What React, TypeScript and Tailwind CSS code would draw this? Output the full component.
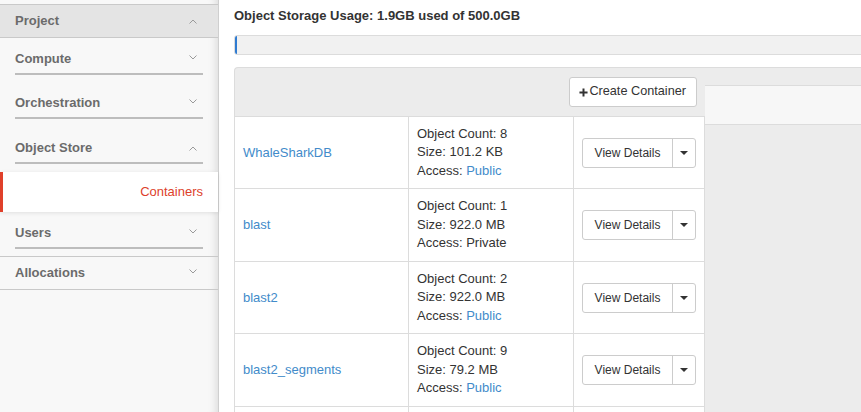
import React from 'react';

const containers = [
  { name: 'WhaleSharkDB', count: 8, size: '101.2 KB', access: 'Public' },
  { name: 'blast', count: 1, size: '922.0 MB', access: 'Private' },
  { name: 'blast2', count: 2, size: '922.0 MB', access: 'Public' },
  { name: 'blast2_segments', count: 9, size: '79.2 MB', access: 'Public' },
];

function Chevron({ up }: { up?: boolean }) {
  return (
    <svg width="8" height="5" viewBox="0 0 8 5" className={up ? 'text-[#9a9a9a]' : 'text-[#9a9a9a] -translate-y-[2px]'}>
      <path
        d={up ? 'M0.5 4.5 L4 1 L7.5 4.5' : 'M0.5 0.5 L4 4 L7.5 0.5'}
        fill="none"
        stroke="currentColor"
        strokeWidth="1"
      />
    </svg>
  );
}

function NavHeading({ label, up, pb, last }: { label: string; up?: boolean; pb: string; last?: boolean }) {
  return (
    <div className={`px-[15px] pt-[13px] ${pb} ${last ? 'border-b border-[#c9c9c9]' : ''}`}>
      <div className="flex items-center justify-between h-[16px]">
        <span className="text-[13px] font-bold leading-[16px] text-[#6b6b6b]">{label}</span>
        <span className="mr-[6px] flex">
          <Chevron up={up} />
        </span>
      </div>
      <div className="mt-[6px] h-[2px] bg-[#bdbdbd]" />
    </div>
  );
}

function Sidebar() {
  return (
    <div className="w-[219px] shrink-0 h-full bg-[#f8f8f8] border-r border-[#cfcfcf] shadow-[inset_-10px_0_8px_-8px_rgba(0,0,0,0.12)]">
      <div className="h-[5px] border-b border-[#c9c9c9]" />
      {/* Project */}
      <div className="h-[33px] bg-[#e4e4e4] border-b border-[#c9c9c9] px-[15px] flex items-center justify-between">
        <span className="text-[13px] font-bold text-[#6b6b6b]">Project</span>
        <span className="mr-[6px] flex">
          <Chevron up />
        </span>
      </div>
      <NavHeading label="Compute" pb="pb-[7px]" />
      <NavHeading label="Orchestration" pb="pb-[8px]" />
      <NavHeading label="Object Store" up pb="pb-[8px]" />
      {/* active item */}
      <div className="h-[40px] bg-white border-l-[3px] border-[#e0402a] flex items-center justify-end pr-[15px] shadow-[0_1px_4px_rgba(0,0,0,0.1)] relative">
        <span className="text-[13px] text-[#dd3f2b]">Containers</span>
      </div>
      <NavHeading label="Users" pb="pb-[7px]" last />
      <div className="h-[33px] border-b border-[#c9c9c9] px-[15px] flex items-center justify-between">
        <span className="text-[13px] font-bold text-[#6b6b6b]">Allocations</span>
        <span className="mr-[6px] flex">
          <Chevron />
        </span>
      </div>
    </div>
  );
}

function Caret() {
  return (
    <svg width="8" height="4" viewBox="0 0 8 4">
      <path d="M0 0 L8 0 L4 4 Z" fill="#333" />
    </svg>
  );
}

export default function App() {
  return (
    <div className="h-[412px] w-full flex overflow-hidden bg-white font-['Liberation_Sans',Arial,sans-serif] text-[#333]">
      <Sidebar />

      <div className="flex-1 min-w-0 overflow-hidden pl-[15px]">
        {/* Usage */}
        <div className="pt-[7px] text-[13px] font-bold leading-[18px] text-[#333]">
          Object Storage Usage: 1.9GB used of 500.0GB
        </div>
        <div className="mt-[10px] -mr-[10px] h-[20px] border border-[#dcdcdc] rounded-l-[3px] bg-[#f1f1f1] flex overflow-hidden">
          <div className="w-[2px] h-full bg-[#2f7bd1]" />
        </div>

        {/* Containers panel */}
        <div className="mt-[12px] -mr-[10px] flex border-t border-l border-[#dcdcdc] rounded-tl-[4px] bg-[#ececec]">
          <div className="w-[470px] shrink-0">
            <div className="h-[48px] flex items-center justify-end pr-[8px]">
              <button className="h-[30px] pl-[9px] pr-[10px] flex items-center gap-[1px] bg-white border border-[#cccccc] rounded-[3px] text-[12.7px] text-[#333]">
                <svg width="9" height="9" viewBox="0 0 10 10">
                  <path d="M3.9 0.5 H6.1 V3.9 H9.5 V6.1 H6.1 V9.5 H3.9 V6.1 H0.5 V3.9 H3.9 Z" fill="#333" />
                </svg>
                Create Container
              </button>
            </div>

            <div className="bg-white border-t border-[#dcdcdc]">
              {containers.map((c, i) => (
                <div
                  key={c.name}
                  className={`flex border-b border-[#dcdcdc] ${i % 2 === 0 ? 'h-[72px]' : 'h-[73px]'}`}
                >
                  <div className="w-[174px] shrink-0 border-r border-[#dcdcdc] pl-[8px] flex items-center">
                    <span className="text-[13px] text-[#428bca]">{c.name}</span>
                  </div>
                  <div className="w-[165px] shrink-0 border-r border-[#dcdcdc] pl-[8px] flex flex-col justify-center text-[13px] leading-[18.57px]">
                    <div>Object Count: {c.count}</div>
                    <div>Size: {c.size}</div>
                    <div>
                      Access:{' '}
                      <span className={c.access === 'Public' ? 'text-[#428bca]' : ''}>{c.access}</span>
                    </div>
                  </div>
                  <div className="w-[131px] shrink-0 border-r border-[#dcdcdc] pl-[8px] flex items-center">
                    <div className="w-[114px] h-[30px] flex border border-[#cccccc] rounded-[3px] bg-white">
                      <div className="w-[89px] flex items-center justify-center text-[12px] text-[#333]">
                        View Details
                      </div>
                      <div className="flex-1 border-l border-[#cccccc] flex items-center justify-center">
                        <Caret />
                      </div>
                    </div>
                  </div>
                </div>
              ))}
              {/* next row, scrolled below the fold */}
              <div className="flex h-[72px]">
                <div className="w-[174px] shrink-0 border-r border-[#dcdcdc]" />
                <div className="w-[165px] shrink-0 border-r border-[#dcdcdc]" />
                <div className="w-[131px] shrink-0 border-r border-[#dcdcdc]" />
              </div>
            </div>
          </div>

          <div className="flex-1">
            <div className="mt-[17px] h-[40px] border-y border-[#dcdcdc] bg-[#f7f7f7]" />
          </div>
        </div>
      </div>
    </div>
  );
}
